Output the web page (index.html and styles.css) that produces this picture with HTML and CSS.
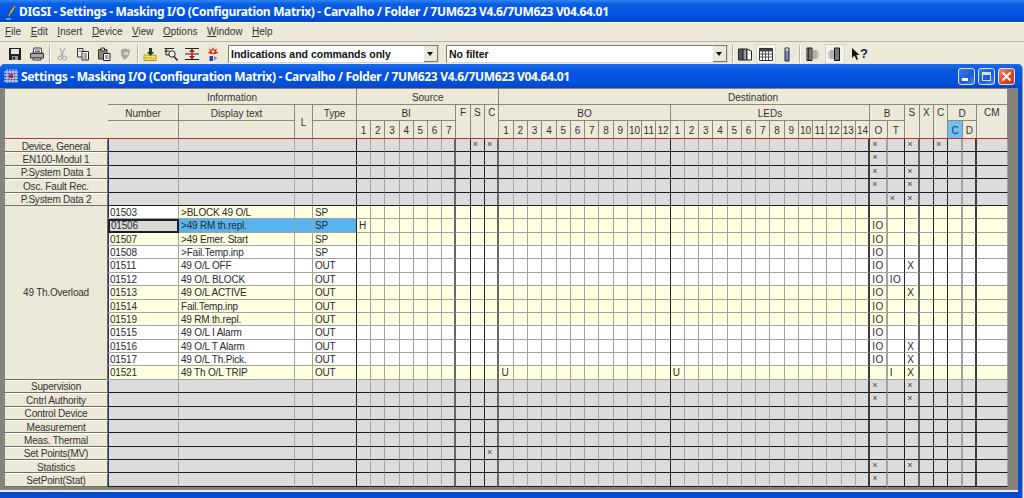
FILE: index.html
```html
<!DOCTYPE html>
<html lang="en">
<head>
  <meta charset="UTF-8">
  <title>DIGSI - Settings - Masking I/O (Configuration Matrix)</title>
  <link rel="stylesheet" href="styles.css">
</head>
<body>
  <div class="titlebar">
    <svg class="app-icon" viewBox="0 0 12 16" width="12" height="16">
      <path d="M10 1 L11 2 L6 10 L4 9 Z" fill="#f4d860" stroke="#40300a" stroke-width=".6"/>
      <path d="M4 9 L6 10 L3 14 Z" fill="#fff" stroke="#222" stroke-width=".6"/>
      <path d="M1 15 H6" stroke="#e0e8ff"/>
    </svg>
    <span class="caption">DIGSI - Settings - Masking I/O (Configuration Matrix) - Carvalho / Folder / 7UM623 V4.6/7UM623 V04.64.01</span>
  </div>

  <div class="menubar">
    <span><u>F</u>ile</span>
    <span><u>E</u>dit</span>
    <span><u>I</u>nsert</span>
    <span><u>D</u>evice</span>
    <span><u>V</u>iew</span>
    <span><u>O</u>ptions</span>
    <span><u>W</u>indow</span>
    <span><u>H</u>elp</span>
  </div>

  <div class="toolbar">
    <div class="tools tools-a">
      <!-- save -->
      <svg class="tool" viewBox="0 0 16 16"><path d="M2 2 H14 V14 H2 Z" fill="#222"/><path d="M4 3 H12 V8 H4 Z" fill="#e8e8e0"/><path d="M5 10 H11 V14 H5 Z" fill="#999"/><path d="M6 11 H8 V13.500 H6 Z" fill="#222"/></svg>
      <!-- print -->
      <svg class="tool" viewBox="0 0 16 16"><path d="M5 2 L12 2 L13 7 H4 Z" fill="#fff" stroke="#333"/><path d="M1.500 7.500 H14.500 V12 H1.500 Z" fill="#aaa" stroke="#333"/><path d="M4 12 H12 V14 H4 Z" fill="#fff" stroke="#333"/><path d="M6 4 H11 M6 5.500 H11" stroke="#666"/></svg>
    </div>
    <i class="sep"></i>
    <div class="tools tools-b">
      <!-- cut, disabled -->
      <svg class="tool" viewBox="0 0 16 16"><path d="M6 2 L9 10 M11 2 L7 10" stroke="#a0a098" fill="none"/><circle cx="6" cy="12" r="2" fill="none" stroke="#a0a098"/><circle cx="10.500" cy="12" r="2" fill="none" stroke="#a0a098"/></svg>
      <!-- copy -->
      <svg class="tool" viewBox="0 0 16 16"><path d="M2.500 2.500 H8 V11 H2.500 Z" fill="#f4f4e8" stroke="#333"/><path d="M7 5.500 H13.500 V14 H7 Z" fill="#fff" stroke="#223"/><path d="M8.500 8 H12 M8.500 10 H12 M8.500 12 H12 M4 5 H6.500" stroke="#445"/></svg>
      <!-- paste -->
      <svg class="tool" viewBox="0 0 16 16"><path d="M2.500 3.500 H11 V13 H2.500 Z" fill="#8a8a78" stroke="#333"/><path d="M5 2 H8.500 V5 H5 Z" fill="#ccc" stroke="#333"/><path d="M7.500 7.500 H14 V14.500 H7.500 Z" fill="#fff" stroke="#223"/><path d="M9 10 H12.500 M9 12 H12.500" stroke="#445"/></svg>
      <!-- stamp, disabled -->
      <svg class="tool" viewBox="0 0 16 16"><path d="M4 4 Q8 1 13 4 L12 9 Q10 13 7 14 L4 9 Z" fill="#a8a89c"/><path d="M7 6 H11 V9 H7 Z" fill="#d4d2c4"/></svg>
    </div>
    <i class="sep"></i>
    <div class="tools tools-c">
      <svg class="tool" viewBox="0 0 16 16"><path d="M2 9 H14 V14.500 H2 Z" fill="#f0dc60" stroke="#a89820"/><path d="M7 2 H10 V6 H12 L8.500 10 L5 6 H7 Z" fill="#184030"/><path d="M3 12 H13" stroke="#a08810" stroke-dasharray="1 1"/></svg>
      <svg class="tool" viewBox="0 0 16 16"><path d="M1.500 2.500 H11 M1.500 5 H6 M3 2.500 V9 H6" stroke="#222" fill="none"/><circle cx="9" cy="8" r="3.200" fill="#e8f4e8" stroke="#222"/><path d="M11 10.500 L14.500 14.500" stroke="#222" stroke-width="1.500"/></svg>
      <svg class="tool" viewBox="0 0 16 16"><path d="M1 2.500 H15 M1 8 H15 M1 13.500 H15" stroke="#222"/><path d="M8 2.500 L11 6 H5 Z M8 13.500 L5 10 H11 Z" fill="#b02020"/><path d="M7.300 5 H8.700 V11 H7.300 Z" fill="#b02020"/></svg>
      <svg class="tool" viewBox="0 0 16 16"><path d="M8 1 L9.200 4 L12 2.500 L11 5.500 L13.500 6.500 L10.500 8 L5.500 8 L2.500 6.500 L5 5.500 L4 2.500 L6.800 4 Z" fill="#e02828"/><circle cx="8" cy="5.500" r="1.500" fill="#f8e060"/><path d="M4.500 10 H8 V15 H4.500 Z" fill="#2840b0"/><path d="M9 10 L12.500 12 L9 14.500 Z" fill="#8090d0"/></svg>
    </div>
    <div class="combo combo-a"><span>Indications and commands only</span><b class="combo-btn"></b></div>
    <div class="combo combo-b"><span>No filter</span><b class="combo-btn"></b></div>
    <i class="sep sep-d"></i>
    <div class="tools tools-d">
      <svg class="tool" viewBox="0 0 16 16"><path d="M1.500 3 H6 V14 H1.500 Z" fill="#555" stroke="#222"/><path d="M6 3 H10 V14 H6 Z" fill="#999" stroke="#222"/><path d="M10 3 L14.500 5 V14 H10 Z" fill="#fff" stroke="#222"/></svg>
      <svg class="tool tool-on" viewBox="0 0 16 16"><path d="M1.500 2.500 H14.500 V14.500 H1.500 Z" fill="#fff" stroke="#333"/><path d="M1.500 3 H14.500 V5.500 H1.500 Z" fill="#444"/><path d="M4.500 5 V14 M7.500 5 V14 M10.500 5 V14 M2 8 H14 M2 11 H14" stroke="#555"/></svg>
      <svg class="tool" viewBox="0 0 16 16"><path d="M6 2 H10 V15 H6 Z" fill="#8088c0" stroke="#222"/><path d="M6.500 2.500 H9.500 V4.500 H6.500 Z" fill="#ddd"/></svg>
    </div>
    <i class="sep"></i>
    <div class="tools tools-e">
      <svg class="tool" viewBox="0 0 16 16"><path d="M3 2 H8 V14.500 H3 Z" fill="#bbb" stroke="#111"/><path d="M4.500 2 V14 M6 2 V14" stroke="#333"/><path d="M10 4 V13 M12 4 V13" stroke="#777"/><path d="M14 5 V12" stroke="#aaa"/></svg>
      <svg class="tool tool-on" viewBox="0 0 16 16"><path d="M7.500 2 H12.500 V14.500 H7.500 Z" fill="#bbb" stroke="#111"/><path d="M9 2 V14 M11 2 V14" stroke="#333"/><path d="M4 4 V13 M6 4 V13" stroke="#777"/><path d="M2 5 V12" stroke="#aaa"/></svg>
    </div>
    <div class="tools tools-f">
      <div class="tool help"><svg viewBox="0 0 9 14" width="9" height="14"><path d="M1 1 L1 11 L3.500 8.500 L5.500 13 L7 12.300 L5.300 8 L8.500 8 Z" fill="#111"/></svg><span>?</span></div>
    </div>
  </div>

  <div class="child">
    <div class="child-title">
      <svg class="child-icon" viewBox="0 0 14 14" width="14" height="14">
        <path d="M0 3 H14 M0 6 H14 M0 9 H14 M0 12 H14" stroke="#fff"/>
        <path d="M3 0 V14 M6 0 V14 M9 0 V14 M12 0 V14" stroke="#e8c8d8"/>
        <path d="M5 5 H9 V9 H5 Z" fill="#d02828"/>
      </svg>
      <span class="caption">Settings - Masking I/O (Configuration Matrix) - Carvalho / Folder / 7UM623 V4.6/7UM623 V04.64.01</span>
      <div class="win-btns">
        <div class="win-btn"><i class="glyph-min"></i></div>
        <div class="win-btn"><i class="glyph-max"></i></div>
        <div class="win-btn win-close">
          <svg viewBox="0 0 11 11" width="11" height="11"><path d="M1.500 1.500 L9.500 9.500 M9.500 1.500 L1.500 9.500" stroke="#fff" stroke-width="2"/></svg>
        </div>
      </div>
    </div>
    <div class="client">
      <div class="matrix" id="matrix"></div>
    </div>
  </div>

  <script>
    // grid columns: 1 row head, 2 number, 3 text, 4 L, 5 type, 6-12 BI, 13-15 F S C,
    // 16-27 BO, 28-41 LEDs, 42-43 B, 44-46 S X C, 47-48 D, 49 CM
    const O = 42, T = 43, S = 44, C = 46, SRC_S = 14, SRC_C = 15, BO1 = 16, LED1 = 28, BI1 = 6;

    const matrix = document.getElementById('matrix');

    function put(cls, text, col, span, row, rowSpan) {
      const el = document.createElement('div');
      el.className = cls;
      el.textContent = text;
      el.style.gridColumn = col + ' / span ' + span;
      el.style.gridRow = row + ' / span ' + rowSpan;
      matrix.appendChild(el);
      return el;
    }

    // header
    const headRows = [
      ['h corner', '', 1, 1, 1, 3],
      ['h', 'Information', 2, 4, 1, 1],
      ['h', 'Source', 6, 10, 1, 1],
      ['h', 'Destination', 16, 34, 1, 1],
      ['h', 'Number', 2, 1, 2, 1],
      ['h', 'Display text', 3, 1, 2, 1],
      ['h h-l', 'L', 4, 1, 2, 2],
      ['h', 'Type', 5, 1, 2, 1],
      ['h', 'BI', 6, 7, 2, 1],
      ['h h-top', 'F', 13, 1, 2, 2],
      ['h h-top', 'S', 14, 1, 2, 2],
      ['h h-top', 'C', 15, 1, 2, 2],
      ['h', 'BO', 16, 12, 2, 1],
      ['h', 'LEDs', 28, 14, 2, 1],
      ['h', 'B', 42, 2, 2, 1],
      ['h h-top', 'S', 44, 1, 2, 2],
      ['h h-top', 'X', 45, 1, 2, 2],
      ['h h-top', 'C', 46, 1, 2, 2],
      ['h', 'D', 47, 2, 2, 1],
      ['h h-top', 'CM', 49, 1, 2, 2],
      ['h h-low', '', 2, 1, 3, 1],
      ['h h-low', '', 3, 1, 3, 1],
      ['h h-low', '', 5, 1, 3, 1],
      ['h h-low', 'O', 42, 1, 3, 1],
      ['h h-low', 'T', 43, 1, 3, 1],
      ['h h-low h-active', 'C', 47, 1, 3, 1],
      ['h h-low', 'D', 48, 1, 3, 1]
    ];
    headRows.forEach(h => put(...h));
    for (let i = 0; i < 7; i++) put('h h-low', i + 1, BI1 + i, 1, 3, 1);
    for (let i = 0; i < 12; i++) put('h h-low', i + 1, BO1 + i, 1, 3, 1);
    for (let i = 0; i < 14; i++) put('h h-low', i + 1, LED1 + i, 1, 3, 1);

    // rows: group rows only carry small marks, the open group has real entries
    const rows = [
      { head: 'Device, General', marks: [SRC_S, SRC_C, O, S, C] },
      { head: 'EN100-Modul 1', marks: [O] },
      { head: 'P.System Data 1', marks: [O, S] },
      { head: 'Osc. Fault Rec.', marks: [O, S] },
      { head: 'P.System Data 2', marks: [T, S] },
      { num: '01503', text: '>BLOCK 49 O/L', type: 'SP', tone: 'yellow', numWhite: true },
      { num: '01506', text: '>49 RM th.repl.', type: 'SP', tone: 'yellow', selected: true, vals: { [BI1]: 'H', [O]: 'IO' } },
      { num: '01507', text: '>49 Emer. Start', type: 'SP', tone: 'yellow', vals: { [O]: 'IO' } },
      { num: '01508', text: '>Fail.Temp.inp', type: 'SP', tone: 'white', vals: { [O]: 'IO' } },
      { num: '01511', text: '49 O/L OFF', type: 'OUT', tone: 'white', vals: { [O]: 'IO', [S]: 'X' } },
      { num: '01512', text: '49 O/L BLOCK', type: 'OUT', tone: 'white', vals: { [O]: 'IO', [T]: 'IO' } },
      { num: '01513', text: '49 O/L ACTIVE', type: 'OUT', tone: 'yellow', vals: { [O]: 'IO', [S]: 'X' } },
      { num: '01514', text: 'Fail.Temp.inp', type: 'OUT', tone: 'yellow', vals: { [O]: 'IO' } },
      { num: '01519', text: '49 RM th.repl.', type: 'OUT', tone: 'yellow', vals: { [O]: 'IO' } },
      { num: '01515', text: '49 O/L I Alarm', type: 'OUT', tone: 'white', vals: { [O]: 'IO' } },
      { num: '01516', text: '49 O/L T Alarm', type: 'OUT', tone: 'white', vals: { [O]: 'IO', [S]: 'X' } },
      { num: '01517', text: '49 O/L Th.Pick.', type: 'OUT', tone: 'white', vals: { [O]: 'IO', [S]: 'X' } },
      { num: '01521', text: '49 Th O/L TRIP', type: 'OUT', tone: 'yellow', vals: { [BO1]: 'U', [LED1]: 'U', [T]: 'I', [S]: 'X' } },
      { head: 'Supervision', marks: [O, S] },
      { head: 'Cntrl Authority', marks: [O, S] },
      { head: 'Control Device', marks: [] },
      { head: 'Measurement', marks: [] },
      { head: 'Meas. Thermal', marks: [] },
      { head: 'Set Points(MV)', marks: [SRC_C] },
      { head: 'Statistics', marks: [O, S] },
      { head: 'SetPoint(Stat)', marks: [O] }
    ];

    // right hand line of each column, everything else is the thin grey default
    const lines = {
      5: 'dark', 12: 'wide', 13: 'dark', 14: 'dark', 15: 'wide', 27: 'dark', 41: 'wide-dark',
      42: 'wide-light', 43: 'dark', 44: 'wide', 45: 'dark', 46: 'dark', 47: 'wide-light', 48: 'wide-dark'
    };

    put('rowhead rowhead-open', '49 Th.Overload', 1, 1, 9, 13);

    rows.forEach((r, i) => {
      const row = i + 4;
      if (r.head) put('rowhead', r.head, 1, 1, row, 1);
      for (let col = 2; col <= 49; col++) {
        let cls = 'cell ' + (r.head ? 'gray' : r.tone);
        let text = '';
        if (lines[col]) cls += ' line-' + lines[col];
        if (col === 2) cls += ' first';
        if (r.head) {
          if (r.marks.includes(col)) { text = '×'; cls += ' mark'; }
        } else {
          if (col === 2) {
            text = r.num;
            if (r.numWhite) cls += ' num-white';
            if (r.selected) cls += ' focus';
          } else if (col === 3) {
            text = r.text;
          } else if (col === 5) {
            text = r.type;
          } else if (r.vals && r.vals[col]) {
            text = r.vals[col];
            cls += ' val';
          }
          if (r.selected && col >= 3 && col <= 5) cls += ' selected';
        }
        put(cls, text, col, 1, row, 1);
      }
    });
  </script>
</body>
</html>
```

FILE: styles.css
```css
html, body {
  height: 100%;
}
body {
  margin: 0;
  display: flex;
  flex-direction: column;
  height: 498px;
  overflow: hidden;
  background: #ece9d8;
  font-family: "Liberation Sans", Arial, sans-serif;
  font-size: 10px;
  color: #222;
}
.caption {
  font-family: "Noto Sans", "Open Sans", sans-serif;
  font-weight: 700;
  font-size: 12px;
  letter-spacing: -0.33px;
  color: #fff;
  white-space: nowrap;
}

/* app title */
.titlebar {
  display: flex;
  align-items: center;
  height: 23px;
  flex: none;
  padding-left: 5px;
  background: linear-gradient(#2f86f0 0, #0a5ee6 4px, #0352de 16px, #0344c8 22px, #fff 22px);
}
.app-icon {
  margin-right: 2px;
}

/* menu */
.menubar {
  display: flex;
  align-items: center;
  gap: 9.5px;
  height: 17px;
  padding-bottom: 1px;
  flex: none;
  padding-left: 5px;
  color: #333;
}

/* toolbar */
.toolbar {
  display: flex;
  align-items: center;
  height: 21px;
  flex: none;
  padding: 1px 0 0 5px;
  border-top: 1px solid #b8b6a8;
}
.tools {
  display: flex;
  align-items: center;
  gap: 1px;
}
.tools-a {
  gap: 2px;
}
.tools-e {
  gap: 3px;
}
.tool {
  width: 20px;
  height: 20px;
  padding: 2px;
  box-sizing: border-box;
  flex: none;
}
.tool-on {
  background: #f4f3ea;
  outline: 1px solid #d8d6c8;
  outline-offset: -1px;
}
.help {
  display: flex;
  align-items: center;
  padding: 0 0 0 3px;
  font-weight: 700;
  font-size: 13px;
  color: #10204a;
  width: 20px;
}
.sep {
  width: 1px;
  height: 18px;
  margin: 0 2px 0 2px;
  background: #b4b2a4;
  box-shadow: 1px 0 #fff;
}
.sep-d {
  margin-left: 4px;
}
.tools-f {
  margin-left: 3px;
}
.combo {
  display: flex;
  align-items: center;
  justify-content: space-between;
  height: 18px;
  padding-left: 2px;
  box-sizing: border-box;
  background: #fff;
  border: 1px solid #7f7d70;
  border-right-color: #d8d6c8;
  border-bottom-color: #d8d6c8;
  font-weight: 700;
  font-size: 10.500px;
  color: #111;
}
.combo-a {
  width: 211px;
  margin-left: 5px;
}
.combo-b {
  width: 282px;
  margin-left: 7px;
}
.combo-btn {
  position: relative;
  width: 14px;
  height: 16px;
  background: #ece9d8;
  border-bottom: 1px solid #777;
  border-right: 1px solid #777;
  box-sizing: border-box;
}
.combo-btn::after {
  content: "";
  position: absolute;
  left: 3px;
  top: 6px;
  border: 3.500px solid transparent;
  border-top: 4px solid #111;
  border-bottom: 0;
}

/* child window */
.child {
  flex: 1;
  display: flex;
  flex-direction: column;
  margin-right: 2px;
  background: #0a4ccc;
  border-radius: 5px 5px 0 0;
  min-height: 0;
  box-shadow: 1px 0 #9aa0b0;
}
.child-title {
  display: flex;
  align-items: center;
  height: 24px;
  flex: none;
  padding-left: 4px;
  border-radius: 5px 5px 0 0;
  background: linear-gradient(#1a6cec 0, #0a58e0 6px, #0350dc 18px, #0346cc 24px);
}
.child-icon {
  margin-right: 3px;
}
.win-btns {
  display: flex;
  gap: 3px;
  margin-left: auto;
  margin-right: 7px;
}
.win-btn {
  display: flex;
  align-items: center;
  justify-content: center;
  width: 17px;
  height: 17px;
  box-sizing: border-box;
  border: 1px solid #d8e4fa;
  border-radius: 3px;
  background: linear-gradient(135deg, #3a78ee, #2058d8 60%, #4c88f0);
}
.win-close {
  background: linear-gradient(135deg, #ec8a68, #d84420 60%, #c83a18);
}
.glyph-min {
  width: 6px;
  height: 3px;
  margin-top: 7px;
  margin-right: 3px;
  background: #fff;
}
.glyph-max {
  width: 9px;
  height: 9px;
  box-sizing: border-box;
  border: 1px solid #cfe0fc;
  border-top-width: 3px;
}
.client {
  flex: none;
  width: 1018px;
  height: 404px;
  padding: 1px 0 0 5px;
  box-sizing: border-box;
  background: #84847c;
  border-bottom: 2px solid #e4ecfa;
}

/* the matrix */
.matrix {
  display: grid;
  width: 1004px;
  grid-template-columns: 103px 71px 116px 18px 44px repeat(7, 14.2px) repeat(3, 14.4px) repeat(12, 14.27px) repeat(14, 14.26px) 17.5px 17.5px repeat(5, 14.4px) 30.5px;
  grid-template-rows: 16px 16px 18px repeat(26, 13.38px);
}
.h {
  display: flex;
  align-items: center;
  justify-content: center;
  padding-top: 2px;
  background: #ece9d8;
  border-right: 1px solid #8a8878;
  border-bottom: 1px solid #8a8878;
  box-sizing: border-box;
  color: #333;
  white-space: nowrap;
  overflow: hidden;
}
.corner {
  border-right: 0;
  border-bottom: 1px solid #c03030;
}
.h-top {
  align-items: flex-start;
  padding-top: 2px;
  border-bottom: 1px solid #c03030;
}
.h-l {
  border-bottom: 1px solid #c03030;
}
.h-low {
  border-bottom: 1px solid #c03030;
  padding-top: 1px;
}
.h-active {
  background: #70c0f4;
}
.rowhead {
  display: flex;
  align-items: center;
  justify-content: center;
  padding-top: 1px;
  background: #ece9d8;
  border-top: 1px solid #fff;
  border-bottom: 1px solid #706e60;
  border-right: 1px solid #706e60;
  box-sizing: border-box;
  letter-spacing: -0.2px;
  color: #333;
  white-space: nowrap;
  overflow: hidden;
}
.rowhead-open {
  border-top: 0;
}
.cell {
  padding-left: 2px;
  box-sizing: border-box;
  border-right: 1px solid #a4a49c;
  border-bottom: 1px solid #a4a49c;
  letter-spacing: -0.2px;
  line-height: 14px;
  white-space: nowrap;
  overflow: hidden;
  color: #2a2a2a;
}
.first {
  box-shadow: inset 1px 0 #20307c;
}
.val {
  letter-spacing: 0.5px;
}
.gray {
  background: #dcdcdc;
  border-bottom: 1px solid #1c1c1c;
}
.yellow {
  background: #ffffe2;
}
.white {
  background: #fff;
}
.num-white {
  background: #fff;
}
.selected {
  background: #58b4f0;
}
.focus {
  background: #d8d8d8;
  line-height: 12px;
  border: 1px solid #1c1c2c;
  box-shadow: inset 0 0 0 1px #1c1c2c;
}
.mark {
  font-size: 9px;
  line-height: 10px;
  color: #444;
}
.line-dark {
  border-right: 1px solid #222;
}
.line-wide {
  border-right: 2px solid #666;
}
.line-wide-dark {
  border-right: 2px solid #3c3c3c;
}
.line-wide-light {
  border-right: 2px solid #a4a49c;
}
```
